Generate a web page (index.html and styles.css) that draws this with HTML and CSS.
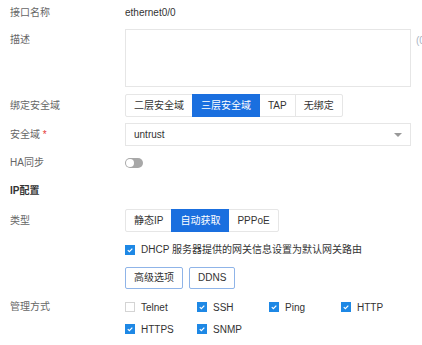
FILE: index.html
```html
<!DOCTYPE html>
<html lang="zh-CN">
<head>
    <meta charset="UTF-8">
    <title>接口配置</title>
    <link rel="stylesheet" href="styles.css">
</head>
<body>
<div class="form">
    <div class="item row-name">
        <div class="label">接口名称</div>
        <div class="control">ethernet0/0</div>
    </div>

    <div class="item row-desc">
        <div class="label">描述</div>
        <div class="control desc">
            <div class="textarea"></div>
            <span class="count">(0/127)</span>
        </div>
    </div>

    <div class="item row-seg">
        <div class="label">绑定安全域</div>
        <div class="control">
            <div class="seg">
                <span class="seg-btn">二层安全域</span>
                <span class="seg-btn active">三层安全域</span>
                <span class="seg-btn">TAP</span>
                <span class="seg-btn">无绑定</span>
            </div>
        </div>
    </div>

    <div class="item row-select">
        <div class="label">安全域 <span class="req">*</span></div>
        <div class="control">
            <div class="select">
                <span>untrust</span>
                <span class="arrow"></span>
            </div>
        </div>
    </div>

    <div class="item row-switch">
        <div class="label">HA同步</div>
        <div class="control">
            <span class="switch"><span class="knob"></span></span>
        </div>
    </div>

    <div class="section-title">IP配置</div>

    <div class="item row-seg2">
        <div class="label">类型</div>
        <div class="control">
            <div class="seg">
                <span class="seg-btn">静态IP</span>
                <span class="seg-btn active">自动获取</span>
                <span class="seg-btn">PPPoE</span>
            </div>
        </div>
    </div>

    <div class="item row-dhcp">
        <div class="label"></div>
        <div class="control">
            <label class="check">
                <span class="box on"><svg viewBox="0 0 10 10"><path d="M2.2 5.1 L4.2 7 L7.9 3.2" /></svg></span>
                DHCP 服务器提供的网关信息设置为默认网关路由
            </label>
        </div>
    </div>

    <div class="item row-btns">
        <div class="label"></div>
        <div class="control btns">
            <span class="btn">高级选项</span>
            <span class="btn">DDNS</span>
        </div>
    </div>

    <div class="item row-manage">
        <div class="label">管理方式</div>
        <div class="control checks">
            <label class="check"><span class="box"></span>Telnet</label>
            <label class="check"><span class="box on"><svg viewBox="0 0 10 10"><path d="M2.2 5.1 L4.2 7 L7.9 3.2" /></svg></span>SSH</label>
            <label class="check"><span class="box on"><svg viewBox="0 0 10 10"><path d="M2.2 5.1 L4.2 7 L7.9 3.2" /></svg></span>Ping</label>
            <label class="check"><span class="box on"><svg viewBox="0 0 10 10"><path d="M2.2 5.1 L4.2 7 L7.9 3.2" /></svg></span>HTTP</label>
            <label class="check"><span class="box on"><svg viewBox="0 0 10 10"><path d="M2.2 5.1 L4.2 7 L7.9 3.2" /></svg></span>HTTPS</label>
            <label class="check"><span class="box on"><svg viewBox="0 0 10 10"><path d="M2.2 5.1 L4.2 7 L7.9 3.2" /></svg></span>SNMP</label>
        </div>
    </div>
</div>
</body>
</html>
```

FILE: styles.css
```css
html {
    overflow: hidden;
}
body {
    margin: 0;
    background: #fff;
    color: #333;
    font: 10px "Liberation Sans", "Noto Sans CJK SC", sans-serif;
}
.form {
    padding-left: 10px;
}
.item {
    display: flex;
    align-items: flex-start;
}
.label {
    width: 115px;
    flex: none;
    color: #666;
    line-height: 22px;
}
.control {
    width: 286px;
    flex: none;
}
.req {
    color: #e53935;
}

/* 行距 */
.row-name .label,
.row-name .control {
    line-height: 26px;
}
.row-desc {
    margin-top: 3px;
}
.row-seg {
    margin-top: 7px;
}
.row-select {
    margin-top: 6px;
}
.row-switch {
    margin-top: 6px;
}
.section-title {
    margin-top: 6px;
    line-height: 22px;
    font-weight: bold;
    color: #333;
}
.row-seg2 {
    margin-top: 7px;
}
.row-dhcp {
    margin-top: 6px;
}
.row-dhcp .control {
    line-height: 24px;
}
.row-btns {
    margin-top: 5px;
}
.row-manage {
    margin-top: 7px;
}
.row-seg .label,
.row-seg2 .label,
.row-select .label {
    line-height: 23px;
}

/* 描述 */
.desc {
    display: flex;
    white-space: nowrap;
}
.textarea {
    width: 284px;
    height: 56px;
    border: 1px solid #e6e6e6;
    flex: none;
}
.count {
    margin-left: 5px;
    margin-top: 6px;
    line-height: 12px;
    color: #aab4c4;
}

/* 分段按钮 */
.seg {
    display: inline-flex;
}
.seg-btn {
    height: 21px;
    line-height: 21px;
    padding: 0 8px;
    border: 1px solid #e6e6e6;
    margin-left: -1px;
    color: #333;
    white-space: nowrap;
}
.seg-btn:first-child {
    margin-left: 0;
    border-radius: 2px 0 0 2px;
}
.seg-btn:last-child {
    border-radius: 0 2px 2px 0;
}
.seg-btn.active {
    background: #1a6fdf;
    border-color: #1a6fdf;
    color: #fff;
    position: relative;
}

/* 下拉框 */
.select {
    height: 21px;
    line-height: 21px;
    border: 1px solid #e6e6e6;
    padding: 0 8px;
    display: flex;
    justify-content: space-between;
    align-items: center;
}
.arrow {
    width: 0;
    height: 0;
    border-left: 4px solid transparent;
    border-right: 4px solid transparent;
    border-top: 4px solid #999;
    margin-right: 0;
}

/* 开关 */
.row-switch .control {
    height: 22px;
    display: flex;
    align-items: center;
}
.switch {
    width: 18px;
    height: 10px;
    border-radius: 5px;
    background: #a8a8a8;
    display: inline-flex;
    align-items: center;
    padding-left: 1px;
    box-sizing: border-box;
}
.knob {
    width: 8px;
    height: 8px;
    border-radius: 50%;
    background: #fff;
}

/* 复选框 */
.check {
    display: flex;
    align-items: center;
    color: #333;
    white-space: nowrap;
}
.box {
    width: 10px;
    height: 10px;
    box-sizing: border-box;
    border: 1px solid #d4d4d4;
    margin-right: 6px;
    flex: none;
    display: flex;
}
.box.on {
    background: #1e88e5;
    border-color: #1e88e5;
}
.box svg {
    width: 8px;
    height: 8px;
}
.box path {
    fill: none;
    stroke: #fff;
    stroke-width: 1.5;
}
.checks {
    display: grid;
    grid-template-columns: repeat(4, 72px);
    grid-auto-rows: 22px;
}

/* 普通按钮 */
.btns {
    display: flex;
    gap: 6px;
}
.btn {
    height: 20px;
    line-height: 20px;
    padding: 0 8px;
    border: 1px solid #8fb4e8;
    border-radius: 2px;
    color: #333;
}
```
